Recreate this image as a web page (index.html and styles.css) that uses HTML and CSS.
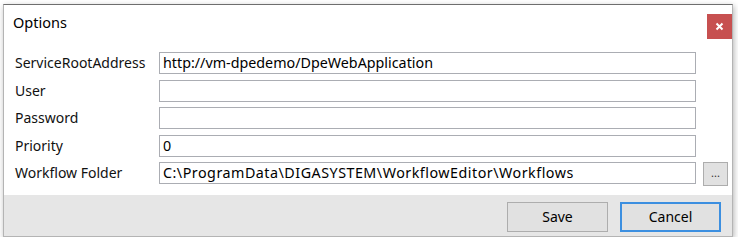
FILE: index.html
```html
<!DOCTYPE html>
<html lang="en">
<head>
  <meta charset="UTF-8" />
  <title>Options</title>
  <link rel="stylesheet" href="styles.css">
</head>
<body>
  <div class="window">
    <div class="titlebar">
      <div class="title">Options</div>
      <div class="close-btn">
        <svg width="9" height="9" viewBox="0 0 9 9"><path d="M1.5 1.5 L7.5 7.5 M7.5 1.5 L1.5 7.5" stroke="#fff" stroke-width="2"/></svg>
      </div>
    </div>
    <div class="form">
      <label class="label">ServiceRootAddress</label>
      <div class="field">http://vm-dpedemo/DpeWebApplication</div>
      <div></div>

      <label class="label">User</label>
      <div class="field"></div>
      <div></div>

      <label class="label">Password</label>
      <div class="field"></div>
      <div></div>

      <label class="label">Priority</label>
      <div class="field">0</div>
      <div></div>

      <label class="label">Workflow Folder</label>
      <div class="field path">C:\ProgramData\DIGASYSTEM\WorkflowEditor\Workflows</div>
      <div class="browse-btn">...</div>
    </div>
    <div class="footer">
      <div class="btn">Save</div>
      <div class="btn default">Cancel</div>
    </div>
  </div>
</body>
</html>
```

FILE: styles.css
```css
html, body {
  margin: 0;
  padding: 0;
  background: #fff;
  font-family: "Noto Sans", "Open Sans", sans-serif;
  color: #000;
}
.window {
  box-sizing: border-box;
  margin: 4px 0 0 3px;
  width: 730px;
  height: 233px;
  background: #fff;
  border: 1px solid #b4b4b4;
  border-top-color: #6e6e6e;
  box-shadow: 1px 2px 6px rgba(0,0,0,0.3);
  display: flex;
  flex-direction: column;
}
.titlebar {
  display: flex;
  justify-content: space-between;
  align-items: flex-start;
  height: 47px;
  padding: 9px 0 0 9px;
  box-sizing: border-box;
}
.title {
  font-size: 14.5px;
  line-height: 22px;
  margin-top: -3px;
}
.close-btn {
  width: 25px;
  height: 25px;
  background: #c75050;
  display: flex;
  justify-content: center;
  align-items: center;
}
.form {
  display: grid;
  grid-template-columns: 137px 1fr 25px;
  grid-auto-rows: 22px;
  column-gap: 7px;
  row-gap: 5.5px;
  padding: 0 4px 0 11px;
  height: 143px;
  box-sizing: border-box;
}
.label {
  font-size: 14px;
  line-height: 22px;
  color: #111;
}
.field {
  border: 1px solid #abadb3;
  font-size: 14.3px;
  line-height: 20px;
  padding-left: 3px;
  white-space: nowrap;
  overflow: hidden;
}
.field.path {
  letter-spacing: 0.5px;
}
.browse-btn {
  height: 24px;
  border: 1px solid #adadad;
  background: #e1e1e1;
  box-sizing: border-box;
  font-size: 11px;
  line-height: 20px;
  text-align: center;
  color: #333;
}
.footer {
  flex: 1;
  background: #e6e6e6;
  display: flex;
  justify-content: flex-end;
  align-items: flex-start;
  gap: 12px;
  padding: 7px 11px 0 0;
}
.btn {
  width: 101px;
  height: 30px;
  box-sizing: border-box;
  border: 1px solid #adadad;
  background: #e1e1e1;
  font-size: 14px;
  line-height: 28px;
  text-align: center;
}
.btn.default {
  border: 2px solid #3c8fe0;
  line-height: 26px;
}
```
